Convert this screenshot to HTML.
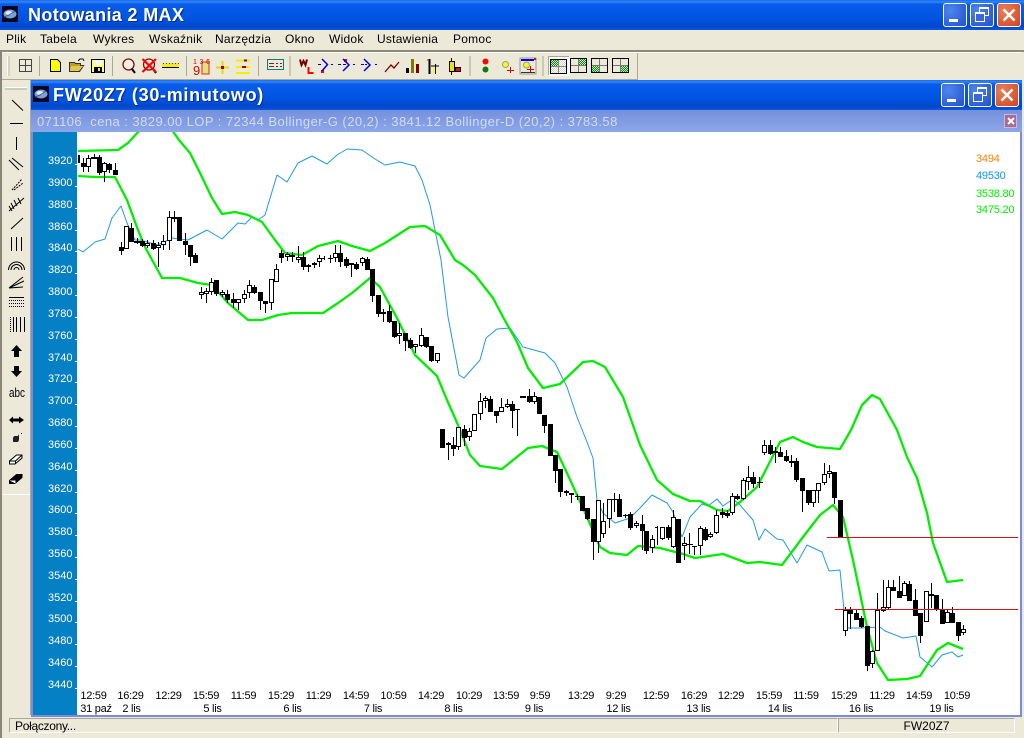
<!DOCTYPE html>
<html lang="pl"><head><meta charset="utf-8"><title>Notowania 2 MAX</title>
<style>
html,body{margin:0;padding:0;width:1024px;height:738px;overflow:hidden;background:#ece9d8;font-family:"Liberation Sans",sans-serif}
div{position:absolute;box-sizing:border-box}
.tb{background:linear-gradient(#1a6cf0 0,#2f86f8 2px,#0a5ce8 4px,#0058e6 45%,#0052dc 70%,#0046c8 88%,#0a58e0 100%)}
.tt{color:#fff;font-weight:bold;font-size:18px;text-shadow:1px 1px 0 #0a2a90;white-space:pre}
.m{top:32px;font-size:12px;line-height:15px;color:#000;letter-spacing:.25px}
.btn{width:24px;height:24px;border:1px solid #fff;border-radius:3px;background:radial-gradient(circle at 30% 30%,#4f86ec,#2f5fd8 70%,#2350c8)}
.cl{background:radial-gradient(circle at 30% 30%,#e8805a,#d9562f 70%,#c4431f)}
svg{position:absolute;display:block}
</style></head><body>
<div class="tb" style="left:0;top:0;width:1024px;height:30px"></div>
<svg style="left:2px;top:6px" width="16" height="16" viewBox="0 0 16 16"><rect width="16" height="16" fill="#000820"/><ellipse cx="8" cy="8" rx="6.5" ry="4.5" fill="#7f9fd0"/><ellipse cx="7" cy="7" rx="3.5" ry="2" fill="#e4ecf8"/><path d="M2 11L7 9L13 5" stroke="#2a5fc0" fill="none"/></svg>
<div class="tt" style="left:28px;top:4px;line-height:22px;letter-spacing:.35px">Notowania 2 MAX</div>
<div class="btn" style="left:943px;top:3px"><div style="left:5px;top:15px;width:9px;height:3px;background:#fff"></div></div>
<div class="btn" style="left:970px;top:3px"><div style="left:8px;top:3px;width:10px;height:9px;border:1px solid #fff;border-top-width:2px"></div><div style="left:4px;top:8px;width:10px;height:10px;border:1px solid #fff;border-top-width:2px;background:#3a68dc"></div></div>
<div class="btn cl" style="left:997px;top:3px"><svg style="left:4px;top:4px" width="14" height="14"><path d="M1.5 1.5L12.5 12.5M12.5 1.5L1.5 12.5" stroke="#fff" stroke-width="2.4"/></svg></div>

<div class="m" style="left:6px">Plik</div><div class="m" style="left:40px">Tabela</div><div class="m" style="left:93px">Wykres</div><div class="m" style="left:149px">Wskaźnik</div><div class="m" style="left:215px">Narzędzia</div><div class="m" style="left:285px">Okno</div><div class="m" style="left:329px">Widok</div><div class="m" style="left:377px">Ustawienia</div><div class="m" style="left:453px">Pomoc</div>

<div style="left:0;top:50px;width:1024px;height:2px;background:#8f8c7c"></div>
<div style="left:1px;top:52px;width:1020px;height:1px;background:#fff"></div>
<div style="left:2px;top:53px;width:636px;height:27px;border-right:1px solid #aca899;border-bottom:1px solid #aca899"></div>
<div style="left:0;top:50px;width:2px;height:688px;background:#8a8778"></div>

<svg style="left:0;top:48px" width="640" height="33" viewBox="0 48 640 33">
<defs><pattern id="c" width="2" height="2" patternUnits="userSpaceOnUse"><rect width="2" height="2" fill="#0a8a0a"/><rect width="1" height="1" fill="#c8ecc0"/><rect x="1" y="1" width="1" height="1" fill="#c8ecc0"/></pattern>
<pattern id="g" width="2" height="2" patternUnits="userSpaceOnUse"><rect width="2" height="2" fill="#fff"/><rect width="1" height="1" fill="#d8d5c8"/><rect x="1" y="1" width="1" height="1" fill="#d8d5c8"/></pattern></defs>
<g shape-rendering="crispEdges">
<rect x="7" y="56" width="1" height="20" fill="#fff"/><rect x="8" y="56" width="2" height="20" fill="#d5d2c0"/>
<path d="M39.5 56V76M112.5 56V76M186.5 56V76M258.5 56V76M290 56V76M470 56V76M543 56V76" stroke="#aca899" fill="none"/>
<path d="M19.5 59.5h12v12h-12zM25.5 59.5v12M19.5 65.5h12" stroke="#444" fill="none"/>
<path d="M50.5 59.5h7l3 3v9h-10z" fill="#ff0" stroke="#000"/>
<path d="M69.5 62.5h5l1 1h5v2h3l-4 6h-10z" fill="#b8a020" stroke="#333"/><path d="M71 66h12l-4 5H70z" fill="#e0c850"/><path d="M78 61l2-2h3l1 2" stroke="#000" fill="none"/>
<rect x="91.5" y="59.5" width="13" height="13" fill="#ffff60" stroke="#000"/><rect x="94" y="60" width="8" height="5" fill="#f8f8f0"/><rect x="94" y="67" width="8" height="5" fill="#000"/><rect x="98" y="68" width="2" height="3" fill="#ddd"/>
<rect x="162" y="63" width="17" height="4" fill="#f4ea20"/><path d="M163 63.5h16" stroke="#444" stroke-dasharray="1 2"/><path d="M162 67.5h17" stroke="#000"/>
<rect x="202" y="62" width="7" height="12" fill="#e8e080" stroke="#d03020"/>
<path d="M222.500 61v13M216 67.500h13" stroke="#e8d800" stroke-width="2"/><rect x="221" y="66" width="3" height="3" fill="#a00000"/>
<path d="M236 60.500h14M236 67h14M236 73h14" stroke="#f0f000" stroke-width="2.400"/><path d="M242 67h4M244 60.500h3" stroke="#900" stroke-width="2"/>
<rect x="267.500" y="59.500" width="16" height="10" fill="#eee8d8" stroke="#008080"/><path d="M269 63.500h5M276 63.500h2M280 63.500h2M269 66.500h5M276 66.500h2M280 66.500h2" stroke="#901818"/>
<path d="M308.500 67v6h5" fill="none" stroke="#f00" stroke-width="2"/>
<path d="M318 64.500h3M331 64.500h2M338 64.500h3M343 64.500h3M353 64.500h2M361 64.500h3M365 64.500h2M375 64.500h2" stroke="#0000c0"/>
<rect x="321" y="70" width="3" height="3" fill="#f00"/><rect x="344" y="59" width="3" height="3" fill="#f00"/>
<rect x="406" y="68" width="3" height="5" fill="#000"/><rect x="411" y="59" width="3" height="14" fill="#807800"/><rect x="416" y="64" width="3" height="9" fill="#800000"/>
<path d="M429.500 59v15" stroke="#000" stroke-width="2"/><path d="M427 60h2" stroke="#f00"/><path d="M435.500 64v10M431 66h8" stroke="#000"/><rect x="433" y="68" width="2" height="5" fill="#ff0"/>
<path d="M451.500 58v17" stroke="#000"/><rect x="449.500" y="61.500" width="5" height="10" fill="#f0e000" stroke="#000"/><rect x="455.500" y="67.500" width="5" height="4" fill="#f00" stroke="#000"/>
<rect x="520" y="58" width="16" height="16" fill="#ece9d8" stroke="#a09c8c"/><rect x="521" y="59" width="13" height="2" fill="#0000e0"/><rect x="534" y="58" width="2" height="2" fill="#f00"/>
<path d="M510.500 67v6M507 70.500h7M530.500 66v7M527 69.500h7" stroke="#e00000"/>
<rect x="521" y="72" width="14" height="1" fill="#333"/>
<rect x="548.500" y="56.500" width="21" height="19" fill="#f8f8f4" stroke="#fff"/><path d="M548 56h21v1h-21zM548 56h1v19h-1z" fill="#aca899"/>
</g>
<g fill="none">
<circle cx="128.500" cy="64.500" r="5.500" stroke="#801010" stroke-width="1.300" fill="#f4f0e4"/><path d="M132 69l3 4" stroke="#000" stroke-width="2"/>
<circle cx="149" cy="64.500" r="5.500" stroke="#801010" stroke-width="1.300"/><path d="M153 69l3 4" stroke="#000" stroke-width="2"/><path d="M142.500 59L156 72M156 59L142.500 72" stroke="#f00" stroke-width="2.200"/>
<path d="M300 59.500l1.500 5.500 2-4 2 4 1.500-5.500" stroke="#700000" stroke-width="2"/>
<path d="M322 59l5.500 5.500L322 71M343 59l6 6-6 6M364 59l6 6-6 6" stroke="#0000e0" stroke-width="1.500"/>
<path d="M385 72l6-7 3 3 5-6" stroke="#800000" stroke-width="1.300"/>
<circle cx="485.500" cy="61.500" r="3" fill="#f00"/><circle cx="485.500" cy="69.500" r="3" fill="#0a7a0a"/>
<circle cx="505.500" cy="64.500" r="3" fill="#ff0" stroke="#999"/><circle cx="526.500" cy="65" r="3" fill="#ff0" stroke="#999"/>
</g>
<g shape-rendering="crispEdges">
<rect x="550.500" y="59.500" width="16" height="14" fill="url(#g)" stroke="#000"/><rect x="551" y="60" width="7" height="6" fill="url(#c)"/><path d="M558.500 60v13M551 66.500h15" stroke="#888"/>
<rect x="570.500" y="58.500" width="16" height="14" fill="none" stroke="#000"/><rect x="579" y="59" width="7" height="6" fill="url(#c)"/><path d="M578.500 59v13M571 65.500h15" stroke="#777"/>
<rect x="591.500" y="58.500" width="16" height="14" fill="none" stroke="#000"/><rect x="592" y="66" width="7" height="6" fill="url(#c)"/><path d="M599.500 59v13M592 65.500h15" stroke="#777"/>
<rect x="612.500" y="58.500" width="16" height="14" fill="none" stroke="#000"/><rect x="621" y="66" width="7" height="6" fill="url(#c)"/><path d="M620.500 59v13M613 65.500h15" stroke="#777"/>
</g>
<text x="193" y="64" font-size="7" fill="#d00" font-family="Liberation Sans" textLength="17">1 3 6</text>
<text x="193" y="75" font-size="13" fill="#d00" font-family="Liberation Sans">9</text>
</svg>

<!-- left toolbar -->
<div style="left:30px;top:80px;width:1px;height:635px;background:#aca899"></div>
<div style="left:3px;top:494px;width:27px;height:1px;background:#fff"></div>
<svg style="left:0;top:82px" width="31" height="420" viewBox="0 82 31 420">
<rect x="5" y="87" width="22" height="1" fill="#fff"/><rect x="5" y="88" width="22" height="2" fill="#cfccba"/>
<g stroke="#000" fill="none">
<path d="M12 100l11 10.500"/>
<path d="M10 123.500h13M16.500 137v13" shape-rendering="crispEdges"/>
<path d="M9 160l10 10M12 158l11 9"/>
<path d="M12 190l10-11M14 190l9-7" stroke-dasharray="2 1"/>
<path d="M9 211l15-13M11 203l3 6M14 200l3 6M18 198l3 6M9 206l3 5"/>
<path d="M11 229l12-11"/>
<path d="M11.500 237v14M16.500 237v14M21.500 237v14" shape-rendering="crispEdges"/>
<path d="M8.500 270a8 8 0 0 1 16 0M11 270a5.500 5.500 0 0 1 11 0M14 270a2.500 2.500 0 0 1 5 0"/>
<path d="M9 288l14-11M9 288l15-7M9 288l14-1"/>
<g shape-rendering="crispEdges"><path d="M9 297.500h15"/><path d="M9 300.500h15M9 303.500h15M9 306.500h15" stroke-dasharray="1 1"/>
<path d="M10.500 317v15" stroke-dasharray="1 1"/><path d="M13.500 317v15M16.500 317v15M20.500 317v15M24.500 317v15"/></g>
</g>
<path d="M16.500 345l5.500 6h-3v6h-5v-6h-3zM16.500 377l5.500-6h-3v-5h-5v5h-3z" fill="#000"/>
<text x="9" y="397" font-size="13" font-family="Liberation Sans" fill="#000" textLength="16" lengthAdjust="spacingAndGlyphs">abc</text>
<path d="M9 420l4-3.500v2h6v-2l5 3.500-5 3.500v-2h-6v2z" fill="#000"/>
<path d="M14 436h4l1-2 0 6-1 2h-5v-4z" fill="#222"/><rect x="21" y="433" width="1" height="1" fill="#000"/>
<path d="M9.500 464l0-3 7-6h5.500v3l-7 6z" fill="#fff" stroke="#000"/><path d="M9.500 461h6l6.500-6M15.500 461v3" stroke="#000" fill="none"/>
<path d="M9.500 483.500l0-3 7-6h5.500v3l-7 6z" fill="#000" stroke="#000"/><path d="M9.500 480.500h6v3z" fill="#fff"/>
</svg>

<!-- child window -->
<div class="tb" style="left:31px;top:80px;width:991px;height:30px"></div>
<svg style="left:33px;top:86px" width="16" height="16" viewBox="0 0 16 16"><rect width="16" height="16" fill="#000820"/><ellipse cx="8" cy="8" rx="6.5" ry="4.500" fill="#7f9fd0"/><ellipse cx="7" cy="7" rx="3.500" ry="2" fill="#e4ecf8"/><path d="M2 11L7 9L13 5" stroke="#2a5fc0" fill="none"/></svg>
<div class="tt" style="left:53px;top:84px;line-height:22px;letter-spacing:.7px">FW20Z7 (30-minutowo)</div>
<div class="btn" style="left:941px;top:83px"><div style="left:5px;top:15px;width:9px;height:3px;background:#fff"></div></div>
<div class="btn" style="left:968px;top:83px"><div style="left:8px;top:3px;width:10px;height:9px;border:1px solid #fff;border-top-width:2px"></div><div style="left:4px;top:8px;width:10px;height:10px;border:1px solid #fff;border-top-width:2px;background:#3a68dc"></div></div>
<div class="btn cl" style="left:995px;top:83px"><svg style="left:4px;top:4px" width="14" height="14"><path d="M1.500 1.500L12.500 12.500M12.500 1.500L1.500 12.500" stroke="#fff" stroke-width="2.400"/></svg></div>
<div style="left:31px;top:110px;width:991px;height:22px;background:linear-gradient(#7590dc,#8ca6e8)"></div>
<div style="left:37px;top:114px;font-size:13px;line-height:16px;color:#d2dcf8;white-space:pre;letter-spacing:.45px">071106  cena : 3829.00 LOP : 72344 Bollinger-G (20,2) : 3841.12 Bollinger-D (20,2) : 3783.58</div>
<div style="left:1004px;top:114px;width:13px;height:14px;background:#a86a98;border:1px solid #d0b8d0"><svg style="left:2px;top:2px" width="8" height="8"><path d="M1 1L7 7M7 1L1 7" stroke="#fff" stroke-width="2"/></svg></div>
<div style="left:31px;top:132px;width:2px;height:585px;background:#7b8bd8"></div>
<div style="left:1020px;top:132px;width:2px;height:585px;background:#7b8bd8"></div>
<div style="left:31px;top:715px;width:991px;height:2px;background:#7b8bd8"></div>
<div style="left:33px;top:132px;width:44px;height:583px;background:#0680c4"></div>
<div style="left:77px;top:132px;width:943px;height:583px;background:#fff"></div>

<svg style="left:0;top:0" width="1024" height="738" viewBox="0 0 1024 738" font-family="Liberation Sans" font-size="11">
<defs><clipPath id="cp"><rect x="78" y="132" width="942" height="583"/></clipPath></defs>
<g fill="#fff">
<text x="48" y="164">3920</text><text x="48" y="186">3900</text><text x="48" y="208">3880</text><text x="48" y="230">3860</text><text x="48" y="251">3840</text><text x="48" y="273">3820</text><text x="48" y="295">3800</text><text x="48" y="317">3780</text><text x="48" y="339">3760</text><text x="48" y="361">3740</text><text x="48" y="382">3720</text><text x="48" y="404">3700</text><text x="48" y="426">3680</text><text x="48" y="448">3660</text><text x="48" y="470">3640</text><text x="48" y="492">3620</text><text x="48" y="513">3600</text><text x="48" y="535">3580</text><text x="48" y="557">3560</text><text x="48" y="579">3540</text><text x="48" y="601">3520</text><text x="48" y="622">3500</text><text x="48" y="644">3480</text><text x="48" y="666">3460</text><text x="48" y="688">3440</text>
</g>
<path shape-rendering="crispEdges" stroke="#fff" d="M75 164.500h2M75 186.500h2M75 208.500h2M75 230.500h2M75 251.500h2M75 273.500h2M75 295.500h2M75 317.500h2M75 339.500h2M75 361.500h2M75 382.500h2M75 404.500h2M75 426.500h2M75 448.500h2M75 470.500h2M75 492.500h2M75 513.500h2M75 535.500h2M75 557.500h2M75 579.500h2M75 601.500h2M75 622.500h2M75 644.500h2M75 666.500h2M75 688.500h2"/>
<g clip-path="url(#cp)" fill="none" stroke-linejoin="round">
<path stroke="#1e9be8" stroke-width="1" d="M78 249L83 252L95 242L105 239L112 218L121 206L127 223L135 240L140 240L158 245L172 238L188 240L207 230L222 239L238 223L245 224L252 217L258 220L265 215L277 175L287 182L298 163L312 156L327 164L337 155L347 149L362 150L375 159L385 165L400 162L415 166L422 180L430 205L441 260L448 317L459 375L464 378L480 360L486 338L497 329L510 328L523 347L545 353L555 363L567 387L577 417L587 442L593 458L597 500L603 513L615 523L630 518L640 508L652 495L667 503L673 512L682 537L690 517L702 504L708 506L717 499L723 506L733 499L740 505L753 520L759 540L765 529L777 539L783 540L797 563L807 545L822 552L829 571L840 570L844 610L848 628L860 628L880 627L885 631L903 638L916 636L920 657L932 667L942 655L952 652L958 657L963 655"/>
<path stroke="#00ee00" stroke-width="2.300" d="M78 151L118 150L128 143L140 130L172 130L179 140L190 153L200 173L212 198L222 214L235 212L248 215L262 222L275 240L285 253L302 255L318 246L338 241L352 246L370 251L385 243L410 227L425 226L440 235L455 260L463 265L475 275L493 298L503 317L517 342L528 368L543 388L560 384L583 362L593 361L605 367L623 397L640 445L657 480L673 494L690 501L700 501L717 510L728 511L740 502L757 487L780 442L793 437L803 442L817 447L840 449L851 430L862 405L872 395L880 399L897 430L907 457L917 478L927 513L933 543L947 582L963 580"/>
<path stroke="#00ee00" stroke-width="2.300" d="M78 176L95 177L115 177L127 200L138 230L145 247L162 278L180 278L198 283L212 285L228 303L248 320L262 320L278 315L292 313L323 313L338 303L352 293L370 278L380 287L397 318L415 355L437 376L447 400L458 425L470 455L480 466L502 469L528 448L542 446L557 452L567 473L587 517L600 547L610 553L627 555L638 546L660 548L683 554L695 558L723 554L747 563L760 562L782 565L803 537L820 515L833 505L843 517L853 560L867 627L877 663L888 680L907 679L920 676L937 650L948 643L963 649"/>
<path stroke="#000" stroke-width="1" shape-rendering="crispEdges" d="M83.500 158V172M88.500 155V172M94.500 154V159M99.500 155V175M104.500 162V182M109.500 163V173M115.500 163V175M121.500 242V255M131.500 223V242M137.500 238V244M142.500 239V247M147.500 240V248M153.500 240V250M158.500 242V267M163.500 235V250M169.500 211V250M174.500 211V222M185.500 233V255M190.500 245V266M195.500 253V263M201.500 287V299M206.500 288V303M211.500 278V295M216.500 280V296M222.500 290V297M227.500 290V303M233.500 293V308M238.500 299V310M244.500 290V303M249.500 280V298M254.500 285V294M260.500 292V310M265.500 301V313M271.500 279V310M276.500 264V282M281.500 250V263M287.500 252V261M292.500 252V262M298.500 246V263M303.500 252V270M308.500 264V272M314.500 262V268M319.500 255V267M324.500 256V260M330.500 255V263M335.500 245V262M340.500 245V267M346.500 257V268M351.500 263V277M356.500 262V270M362.500 257V266M367.500 257V270M372.500 269V302M378.500 295V317M383.500 309V322M389.500 305V323M394.500 321V338M399.500 323V344M405.500 333V351M410.500 338V349M415.500 344V353M421.500 328V347M426.500 337V348M431.500 346V362M437.500 353V363M448.500 442V460M453.500 437V456M458.500 427V450M464.500 425V446M469.500 428V441M474.500 414V431M480.500 393V420M485.500 396V408M490.500 396V412M496.500 411V423M501.500 398V412M507.500 399V408M512.500 401V428M517.500 409V436M529.500 389V403M534.500 392V404M539.500 397V414M544.500 415V433M550.500 424V456M555.500 455V483M560.500 469V497M566.500 490V496M571.500 493V503M577.500 494V500M582.500 496V511M587.500 508V520M593.500 519V560M598.500 500V553M603.500 503V538M609.500 499V528M614.500 493V512M619.500 494V517M625.500 514V518M630.500 512V530M636.500 521V528M642.500 515V550M646.500 531V554M652.500 535V553M657.500 526V545M662.500 527V540M668.500 525V540M673.500 510V548M684.500 537V560M689.500 533V554M694.500 546V555M700.500 526V555M705.500 527V541M710.500 532V538M716.500 510V534M722.500 508V518M727.500 510V518M732.500 493V515M737.500 494V500M743.500 478V500M748.500 466V490M753.500 472V488M759.500 477V488M764.500 440V455M770.500 440V455M775.500 447V463M780.500 447V457M786.500 450V462M791.500 455V467M796.500 458V482M802.500 478V512M808.500 490V505M813.500 490V507M818.500 483V503M824.500 463V485M829.500 465V478M834.500 472V504M845.500 607V636M850.500 607V629M856.500 609V620M861.500 616V628M867.500 626V671M872.500 650V668M877.500 593V651M883.500 580V612M888.500 580V610M893.500 580V591M899.500 576V598M904.500 581V596M909.500 581V601M915.500 589V616M920.500 613V643M926.500 591V622M931.500 583V608M936.500 595V611M942.500 599V624M947.500 610V623M952.500 607V623M958.500 622V641M963.500 625V635"/>
<path fill="#fff" stroke="#000" stroke-width="1" shape-rendering="crispEdges" d="M86.500 158.500h4V166.500h-4zM102.500 163.500h4V171.500h-4zM124.500 226.500h4V248.500h-4zM145.500 243.500h4V245.500h-4zM156.500 245.500h4V247.500h-4zM161.500 241.500h4V244.500h-4zM167.500 217.500h4V240.500h-4zM199.500 292.500h4V294.500h-4zM204.500 291.500h4V293.500h-4zM209.500 282.500h4V291.500h-4zM220.500 292.500h4V294.500h-4zM236.500 299.500h4V302.500h-4zM242.500 294.500h4V298.500h-4zM247.500 285.500h4V292.500h-4zM269.500 279.500h4V302.500h-4zM274.500 269.500h4V281.500h-4zM285.500 254.500h4V256.500h-4zM296.500 257.500h4V259.500h-4zM312.500 263.500h4V264.500h-4zM317.500 258.500h4V261.500h-4zM333.500 253.500h4V257.500h-4zM360.500 258.500h4V262.500h-4zM381.500 312.500h4V313.500h-4zM397.500 333.500h4V335.500h-4zM413.500 344.500h4V346.500h-4zM419.500 335.500h4V345.500h-4zM435.500 353.500h4V360.500h-4zM446.500 443.500h4V444.500h-4zM456.500 427.500h4V446.500h-4zM467.500 431.500h4V436.500h-4zM472.500 414.500h4V430.500h-4zM478.500 401.500h4V413.500h-4zM483.500 398.500h4V400.500h-4zM499.500 407.500h4V411.500h-4zM505.500 404.500h4V406.500h-4zM532.500 396.500h4V401.500h-4zM596.500 500.500h4V541.500h-4zM601.500 521.500h4V533.500h-4zM607.500 499.500h4V518.500h-4zM634.500 523.500h4V525.500h-4zM650.500 539.500h4V547.500h-4zM660.500 527.500h4V538.500h-4zM671.500 517.500h4V546.500h-4zM682.500 543.500h4V545.500h-4zM698.500 528.500h4V545.500h-4zM708.500 534.500h4V536.500h-4zM714.500 515.500h4V532.500h-4zM730.500 496.500h4V512.500h-4zM741.500 480.500h4V498.500h-4zM746.500 477.500h4V481.500h-4zM762.500 445.500h4V452.500h-4zM773.500 451.500h4V452.500h-4zM811.500 490.500h4V502.500h-4zM816.500 483.500h4V490.500h-4zM822.500 474.500h4V482.500h-4zM827.500 471.500h4V473.500h-4zM843.500 610.500h4V630.500h-4zM870.500 651.500h4V663.500h-4zM875.500 610.500h4V650.500h-4zM881.500 607.500h4V610.500h-4zM886.500 587.500h4V607.500h-4zM902.500 583.500h4V595.500h-4zM924.500 591.500h4V621.500h-4zM945.500 612.500h4V622.500h-4zM961.500 629.500h4V632.500h-4z"/>
<path fill="#000" shape-rendering="crispEdges" d="M78 155h2V163h-2zM81 163h5V167h-5zM91 157h6V159h-6zM97 157h5V173h-5zM107 164h5V170h-5zM113 170h5V175h-5zM119 247h5V251h-5zM129 228h5V242h-5zM134 241h6V243h-6zM140 241h5V246h-5zM151 243h5V249h-5zM172 217h5V219h-5zM177 217h5V241h-5zM183 241h5V245h-5zM188 245h5V257h-5zM193 255h5V263h-5zM214 280h5V294h-5zM225 294h5V300h-5zM231 299h5V303h-5zM252 287h5V293h-5zM258 292h5V301h-5zM263 301h5V304h-5zM279 253h5V258h-5zM290 255h5V257h-5zM301 257h5V267h-5zM306 265h5V267h-5zM322 258h3V259h-3zM328 258h5V259h-5zM338 253h5V262h-5zM344 259h5V266h-5zM349 263h5V265h-5zM354 264h5V269h-5zM365 259h5V270h-5zM370 269h5V296h-5zM376 295h5V314h-5zM387 311h5V322h-5zM392 321h5V337h-5zM403 333h5V341h-5zM408 340h5V348h-5zM424 337h5V347h-5zM429 346h5V361h-5zM440 429h5V448h-5zM451 445h5V449h-5zM462 429h5V438h-5zM488 399h5V412h-5zM494 411h5V416h-5zM510 404h5V411h-5zM515 409h5V410h-5zM520 396h6V398h-6zM527 396h5V402h-5zM537 397h5V414h-5zM542 415h5V426h-5zM548 424h5V456h-5zM553 455h5V471h-5zM558 469h5V492h-5zM564 491h5V493h-5zM569 493h5V495h-5zM575 496h5V497h-5zM580 496h5V511h-5zM585 508h5V519h-5zM591 519h5V542h-5zM612 499h5V500h-5zM617 499h5V517h-5zM623 515h5V516h-5zM628 514h5V528h-5zM640 524h5V531h-5zM644 531h5V551h-5zM655 527h3V528h-3zM666 527h5V538h-5zM676 519h5V563h-5zM687 544h6V545h-6zM692 546h5V547h-5zM703 529h5V540h-5zM720 512h5V515h-5zM725 513h5V516h-5zM735 496h5V499h-5zM751 477h5V484h-5zM757 482h6V483h-6zM768 445h5V454h-5zM778 452h5V457h-5zM784 456h5V461h-5zM789 461h5V463h-5zM794 461h5V480h-5zM800 478h5V491h-5zM806 490h5V503h-5zM832 472h5V498h-5zM838 500h5V537h-5zM848 610h5V614h-5zM854 613h5V620h-5zM859 618h5V627h-5zM865 626h5V666h-5zM891 587h5V591h-5zM897 591h5V598h-5zM907 584h5V601h-5zM913 600h5V616h-5zM918 613h5V636h-5zM929 594h5V596h-5zM934 595h5V610h-5zM940 610h5V624h-5zM950 613h5V623h-5zM956 622h5V636h-5z"/>
<path stroke="#d8101c" stroke-width="1" shape-rendering="crispEdges" d="M827 537.500H1018M835 609.500H1018"/>
</g>
<g font-size="11" letter-spacing="-.2">
<text x="976" y="162" fill="#ff8000">3494</text><text x="976" y="179" fill="#0a96f0">49530</text><text x="976" y="197" fill="#00f000">3538.80</text><text x="976" y="213" fill="#00f000">3475.20</text>
</g>
<g fill="#000" letter-spacing="-.25" text-anchor="middle">
<text x="93.500" y="699">12:59</text><text x="130.500" y="699">16:29</text><text x="168.500" y="699">12:29</text><text x="206" y="699">15:59</text><text x="243.500" y="699">11:59</text><text x="281" y="699">15:29</text><text x="318.500" y="699">11:29</text><text x="356" y="699">14:59</text><text x="393.500" y="699">10:59</text><text x="431" y="699">14:29</text><text x="469" y="699">10:29</text><text x="506" y="699">13:59</text><text x="540" y="699">9:59</text><text x="581" y="699">13:29</text><text x="616" y="699">9:29</text><text x="656" y="699">12:59</text><text x="694" y="699">16:29</text><text x="731" y="699">12:29</text><text x="769" y="699">15:59</text><text x="806" y="699">11:59</text><text x="844" y="699">15:29</text><text x="882" y="699">11:29</text><text x="919" y="699">14:59</text><text x="957" y="699">10:59</text>
<text x="96" y="712">31 paź</text><text x="131.500" y="712">2 lis</text><text x="212.500" y="712">5 lis</text><text x="292.500" y="712">6 lis</text><text x="373" y="712">7 lis</text><text x="453.500" y="712">8 lis</text><text x="534" y="712">9 lis</text><text x="618.500" y="712">12 lis</text><text x="698.500" y="712">13 lis</text><text x="780" y="712">14 lis</text><text x="861" y="712">16 lis</text><text x="941.500" y="712">19 lis</text>
</g>
</svg>

<!-- status bar -->
<div style="left:9px;top:718px;width:829px;height:15px;border:1px solid;border-color:#aca899 #fff #fff #aca899;font-size:12px;line-height:14px;padding-left:5px;color:#000;white-space:pre;letter-spacing:-.3px">Połączony...</div>
<div style="left:838px;top:718px;width:177px;height:15px;border:1px solid;border-color:#aca899 #fff #fff #aca899;font-size:12px;line-height:14px;text-align:center;color:#000">FW20Z7</div>
</body></html>
